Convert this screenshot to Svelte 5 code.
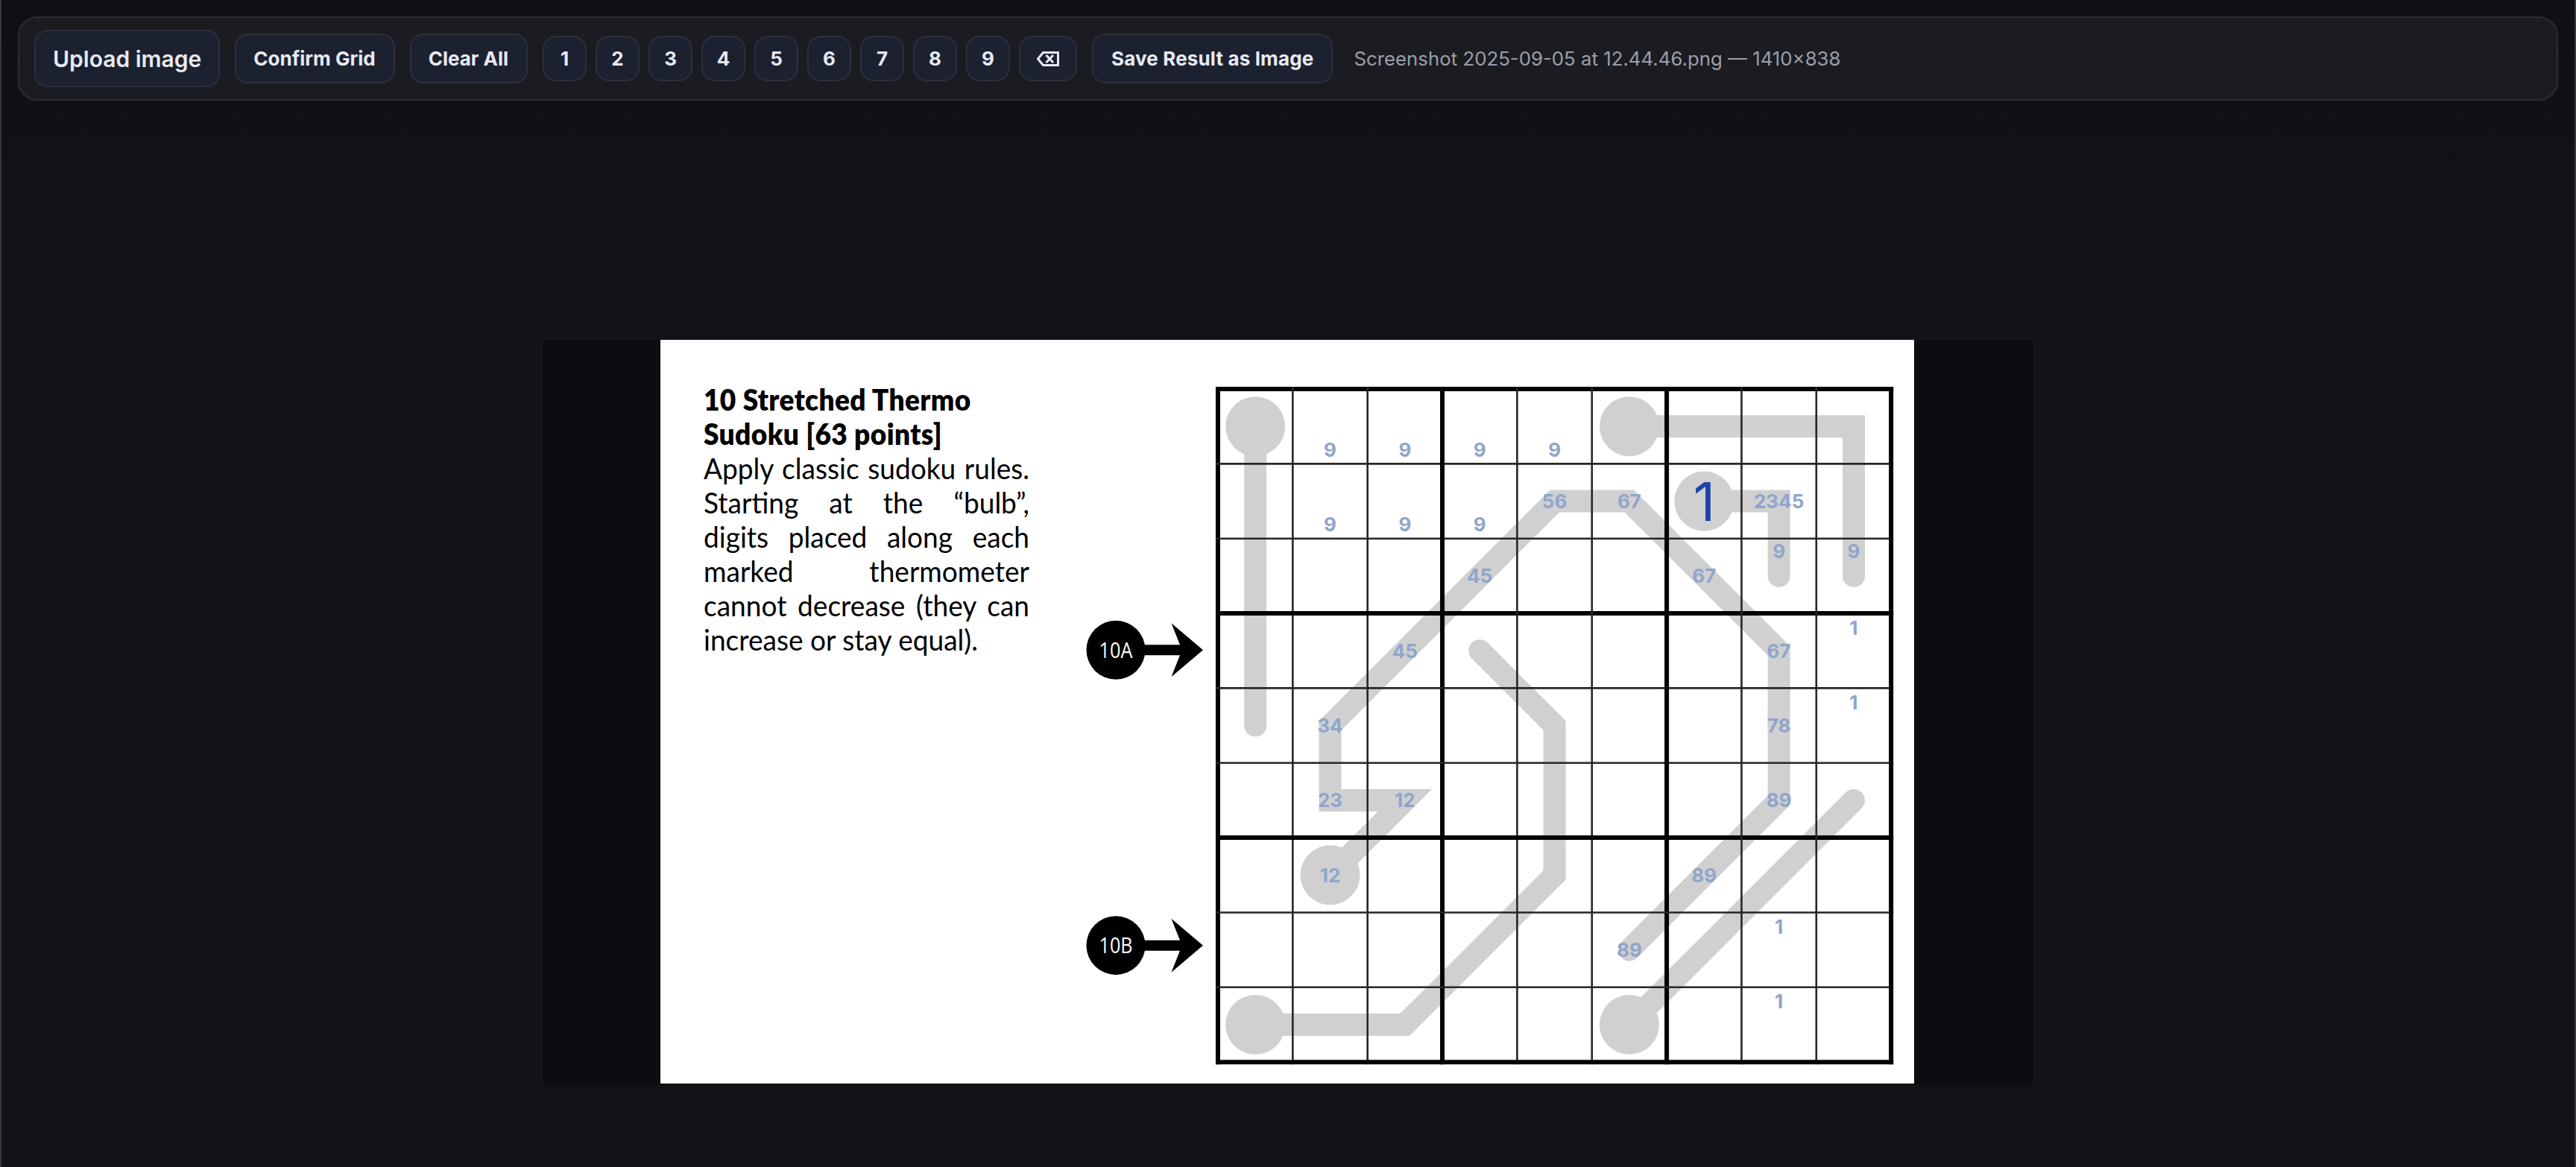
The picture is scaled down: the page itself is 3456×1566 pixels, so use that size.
<script>
  const DIGITS = [1, 2, 3, 4, 5, 6, 7, 8, 9];
  const CELL = 100.35;
  const ORIGIN_X = 184;
  const ORIGIN_Y = 66;

  // thermometers as [col, row] steps, the first one is the bulb
  const thermos = [
    [[0, 0], [0, 4]],
    [[5, 0], [8, 0], [8, 2]],
    [[6, 1], [7, 1], [7, 2]],
    [[1, 6], [2, 5], [1, 5], [1, 4], [4, 1], [5, 1], [7, 3], [7, 5], [5, 7]],
    [[0, 8], [2, 8], [4, 6], [4, 4], [3, 3]],
    [[5, 8], [8, 5]]
  ];

  // pencil marks: col, row, text, vertical nudge inside the cell
  const notes = [
    [1, 0, '9', 31], [2, 0, '9', 31], [3, 0, '9', 31], [4, 0, '9', 31],
    [1, 1, '9', 31], [2, 1, '9', 31], [3, 1, '9', 31],
    [4, 1, '56', 0], [5, 1, '67', 0], [7, 1, '2345', 0],
    [7, 2, '9', -33], [8, 2, '9', -33],
    [3, 2, '45', 0], [6, 2, '67', 0],
    [2, 3, '45', 0], [7, 3, '67', 0], [8, 3, '1', -31],
    [1, 4, '34', 0], [7, 4, '78', 0], [8, 4, '1', -31],
    [1, 5, '23', 0], [2, 5, '12', 0], [7, 5, '89', 0],
    [1, 6, '12', 0], [6, 6, '89', 0],
    [5, 7, '89', 0], [7, 7, '1', -31],
    [7, 8, '1', -31]
  ];

  const markers = [
    { label: '10A', row: 3 },
    { label: '10B', row: 7 }
  ];

  const lineIndexes = [0, 1, 2, 3, 4, 5, 6, 7, 8, 9];
  const gridEnd = CELL * 9;

  const cx = (col) => ORIGIN_X + CELL * (col + 0.5);
  const cy = (row) => ORIGIN_Y + CELL * (row + 0.5);
  const thermoPoints = (steps) => steps.map(([c, r]) => `${cx(c)},${cy(r)}`).join(' ');
</script>

<div class="page">
  <header class="toolbar">
    <button class="btn upload">Upload image</button>
    <button class="btn wide">Confirm Grid</button>
    <button class="btn wide">Clear All</button>
    <div class="digits">
      {#each DIGITS as digit}
        <button class="btn digit">{digit}</button>
      {/each}
      <button class="btn erase" aria-label="Erase">
        <svg width="32" height="22" viewBox="0 0 32 22" fill="none" stroke="currentColor" stroke-width="3">
          <path d="M9.5 2.5H29.5V19.5H9.5L2.5 11Z" stroke-linejoin="miter" />
          <path d="M13.5 6L23 16M23 6L13.5 16" />
        </svg>
      </button>
    </div>
    <button class="btn save">Save Result as Image</button>
    <span class="file">Screenshot 2025-09-05 at 12.44.46.png — 1410×838</span>
  </header>

  <main class="workspace">
    <div class="canvas">
      <div class="sheet">
        <div class="rules">
          <div class="rules-text">
            <h1>10 Stretched Thermo Sudoku [63 points]</h1>
            <p>Apply classic sudoku rules. Starting at the “bulb”, digits placed along each marked thermometer cannot decrease (they can increase or stay equal).</p>
          </div>
        </div>
        <svg class="board" viewBox="0 0 1118 998" width="1118" height="998">
          {#each thermos as steps}
            <circle cx={cx(steps[0][0])} cy={cy(steps[0][1])} r="40" fill="#d0d0d0" />
            <polyline points={thermoPoints(steps)} fill="none" stroke="#d0d0d0" stroke-width="30" stroke-linecap="round" stroke-linejoin="miter" />
          {/each}

          {#each lineIndexes as i}
            <line
              x1={ORIGIN_X + i * CELL} y1={ORIGIN_Y - 3} x2={ORIGIN_X + i * CELL} y2={ORIGIN_Y + gridEnd + 3}
              stroke={i % 3 === 0 ? '#000' : '#262626'} stroke-width={i % 3 === 0 ? 6 : 2.6}
            />
            <line
              x1={ORIGIN_X - 3} y1={ORIGIN_Y + i * CELL} x2={ORIGIN_X + gridEnd + 3} y2={ORIGIN_Y + i * CELL}
              stroke={i % 3 === 0 ? '#000' : '#262626'} stroke-width={i % 3 === 0 ? 6 : 2.6}
            />
          {/each}

          {#each markers as marker}
            {@const my = cy(marker.row) + (marker.row === 3 ? -1 : -6)}
            <circle cx="47" cy={my} r="39.5" fill="#000" />
            <polygon
              points="80,{my - 7} 133,{my - 7} 121.5,{my - 36} 164,{my} 121.5,{my + 36} 133,{my + 7} 80,{my + 7}"
              fill="#000"
            />
            <text class="marker" x="47" y={my - 1} textLength="45" lengthAdjust="spacingAndGlyphs">{marker.label}</text>
          {/each}

          {#each notes as [col, row, text, dy]}
            <text class="note" x={cx(col)} y={cy(row) + dy}>{text}</text>
          {/each}
          <text class="given" x={cx(6)} y={cy(1)}>1</text>
        </svg>
      </div>
    </div>
  </main>
</div>

<style>
  :global(body) {
    margin: 0;
    background: #111318;
  }

  .page {
    box-sizing: border-box;
    min-height: 100vh;
    display: flex;
    flex-direction: column;
    padding: 22px 22px 110px;
    border-left: 2px solid #34363a;
    border-right: 2px solid #34363a;
    background: linear-gradient(180deg, #0e1014 0, #111318 360px);
    font-family: Inter, "Liberation Sans", sans-serif;
  }

  .toolbar {
    display: flex;
    align-items: center;
    gap: 20px;
    padding: 16px 20px;
    border: 2px solid #2a2e38;
    border-radius: 26px;
    background: #1a1c21;
  }

  .btn {
    box-sizing: border-box;
    height: 67px;
    padding: 0 23px;
    border: 2px solid #2b303c;
    border-radius: 18px;
    background: #1c2130;
    color: #e8eaf2;
    font: 700 26px Inter, "Liberation Sans", sans-serif;
    cursor: pointer;
  }

  .upload {
    height: 77px;
    padding: 0 23px;
    font-size: 30px;
    font-weight: 600;
  }

  .wide {
    padding: 0 24px 0 23px;
  }

  .save {
    letter-spacing: 0.15px;
    padding: 0 24px;
  }

  .digits {
    display: flex;
    align-items: center;
    gap: 12px;
  }

  .digit {
    width: 59px;
    height: 61px;
    padding: 0;
  }

  .erase {
    display: flex;
    align-items: center;
    justify-content: center;
    width: 78px;
    height: 61px;
    padding: 0;
  }

  .file {
    margin-left: 8px;
    color: #9a9fab;
    font-size: 25.8px;
  }

  .workspace {
    display: flex;
    justify-content: center;
    padding-top: 321px;
  }

  .canvas {
    box-sizing: border-box;
    display: flex;
    justify-content: center;
    width: 2000px;
    height: 1000px;
    padding-right: 2px;
    background: #0c0d10;
  }

  .sheet {
    display: flex;
    width: 1682px;
    height: 998px;
    background: #fff;
  }

  .rules {
    flex: none;
    width: 437px;
    margin: 57px 0 0 58px;
  }

  /* the scan's typeface is a narrow one, so squeeze Lato to its width */
  .rules-text {
    width: 460px;
    color: #000;
    font-family: Lato, sans-serif;
    font-size: 39px;
    line-height: 46px;
    transform: scaleX(0.95);
    transform-origin: left top;
  }

  .rules h1 {
    margin: 0;
    font-size: inherit;
    font-weight: 800;
    letter-spacing: 0.4px;
    line-height: inherit;
  }

  .rules p {
    margin: 0;
    text-align: justify;
  }

  .board {
    flex: none;
    margin-left: auto;
  }

  .note {
    fill: #8fa5cb;
    font: 700 26px Inter, sans-serif;
    text-anchor: middle;
    dominant-baseline: central;
  }

  .given {
    fill: #1a44a8;
    font: 400 72px Inter, sans-serif;
    text-anchor: middle;
    dominant-baseline: central;
  }

  .marker {
    fill: #fff;
    font: 400 30px "Open Sans", sans-serif;
    text-anchor: middle;
    dominant-baseline: central;
  }
</style>
